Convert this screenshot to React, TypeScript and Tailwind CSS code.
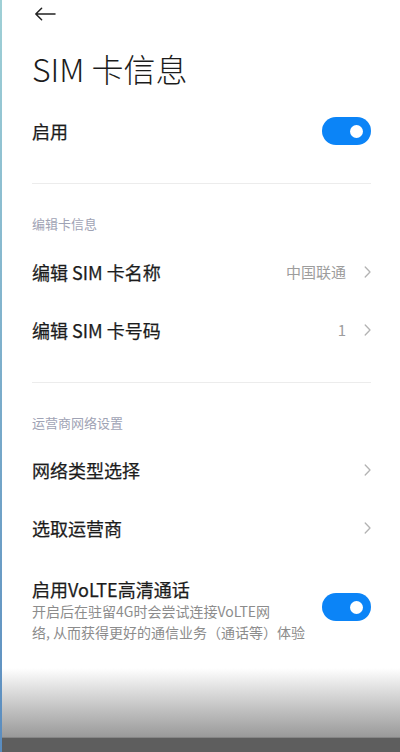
import React from "react";

const FONT = '"Noto Sans CJK SC", "Noto Sans", Roboto, sans-serif';

function Chevron() {
  return (
    <svg width="7" height="12" viewBox="0 0 7 12" className="ml-[18px] shrink-0">
      <path d="M1.2 1l4.8 5-4.8 5" fill="none" stroke="#b3b3b3" strokeWidth="1.3" strokeLinecap="round" strokeLinejoin="round" />
    </svg>
  );
}

function Toggle({ className = "" }: { className?: string }) {
  return (
    <div className={"flex h-[28px] w-[49px] shrink-0 items-center justify-end rounded-full bg-[#0b84f7] pr-[8px] " + className}>
      <div className="h-[13px] w-[13px] rounded-full bg-white" />
    </div>
  );
}

function NavRow({ title, value }: { title: string; value?: string }) {
  return (
    <div className="flex h-[58px] items-center justify-between">
      <span className="text-[18px] font-normal leading-[24px] text-[#1c1c1c] [-webkit-text-stroke:0.25px_#1c1c1c]">{title}</span>
      <div className="flex items-center">
        {value && <span className="text-[15px] leading-[20px] text-[#9d9d9d]">{value}</span>}
        <Chevron />
      </div>
    </div>
  );
}

export default function App() {
  return (
    <div className="flex h-[752px] w-[400px] overflow-hidden bg-white" style={{ fontFamily: FONT }}>
      <div className="w-[2px] shrink-0 bg-gradient-to-b from-[#9fd0d6] to-[#5a8cbf]" />
      <div className="flex flex-1 flex-col">
        <div className="flex flex-col pl-[30px] pr-[29px]">
          <div className="flex h-[28px] items-center pl-[2px]">
            <svg width="22" height="14" viewBox="0 0 22 14">
              <path d="M21 7H1.8M7.6 1.2L1.8 7l5.8 5.8" fill="none" stroke="#222" strokeWidth="1.5" strokeLinecap="round" strokeLinejoin="round" />
            </svg>
          </div>
          <div className="mt-[20px] text-[32px] font-light leading-[40px] text-[#1c1c1c]">SIM 卡信息</div>

          <div className="mt-[14px] flex h-[58px] items-center justify-between">
            <span className="text-[18px] font-normal leading-[24px] text-[#1c1c1c] [-webkit-text-stroke:0.25px_#1c1c1c]">启用</span>
            <Toggle />
          </div>

          <div className="mt-[23px] h-px bg-[#ececec]" />

          <div className="mt-[31px] text-[13px] leading-[18px] text-[#9fa3b5]">编辑卡信息</div>
          <div className="mt-[10px]">
            <NavRow title="编辑 SIM 卡名称" value="中国联通" />
            <NavRow title="编辑 SIM 卡号码" value="1" />
          </div>

          <div className="mt-[23px] h-px bg-[#ececec]" />

          <div className="mt-[31px] text-[13px] leading-[18px] text-[#9fa3b5]">运营商网络设置</div>
          <div className="mt-[9px]">
            <NavRow title="网络类型选择" />
            <NavRow title="选取运营商" />
          </div>

          <div className="flex items-start justify-between pt-[20px]">
            <div className="flex flex-col">
              <span className="text-[18px] font-normal leading-[24px] text-[#1c1c1c] [-webkit-text-stroke:0.25px_#1c1c1c]">启用VoLTE高清通话</span>
              <span className="text-[14px] leading-[21px] text-[#8c8c8c]">
                开启后在驻留4G时会尝试连接VoLTE网
                <br />
                络, 从而获得更好的通信业务（通话等）体验
              </span>
            </div>
            <Toggle className="mt-[16px]" />
          </div>
        </div>

        <div className="flex-1" />
        <div className="h-[69px] bg-gradient-to-b from-white to-[#9a9a9a]" />
        <div className="h-[15px] border-t border-[#858585] bg-[#5e5e5e]" />
      </div>
    </div>
  );
}
